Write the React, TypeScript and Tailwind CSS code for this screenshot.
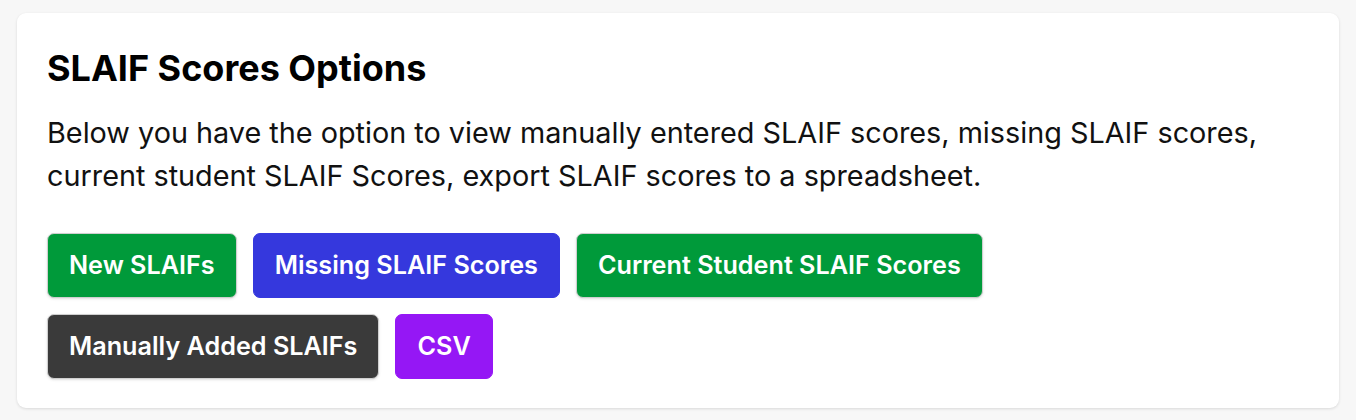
import React from "react";

export default function App() {
  const btn =
    "h-[65px] px-[21px] border rounded-[7px] text-white text-[25.2px] font-semibold leading-none flex items-center";
  return (
    <div
      className="min-h-[420px] bg-[#f7f7f7] px-[17px] pt-[13px]"
      style={{ fontFamily: "Inter, 'Noto Sans', sans-serif" }}
    >
      <div className="bg-white rounded-[9px] shadow-[0_1px_3px_rgba(0,0,0,0.12)] px-[30px] pt-[34px] pb-[29px]">
        <h2 className="text-[36px] font-bold leading-[43px] text-black">
          SLAIF Scores Options
        </h2>
        <p className="mt-[21px] text-[28.8px] leading-[43px] text-[#111]">
          Below you have the option to view manually entered SLAIF scores, missing SLAIF scores,
          <br />
          current student SLAIF Scores, export SLAIF scores to a spreadsheet.
        </p>
        <div className="mt-[36px] flex flex-wrap gap-x-[16px] gap-y-[16px] max-w-[1000px]">
          <button className={`${btn} bg-[#009a3a] border-[#cfcfcf] shadow-sm`}>New SLAIFs</button>
          <button className={`${btn} bg-[#3538dd] border-[#3538dd]`}>Missing SLAIF Scores</button>
          <button className={`${btn} bg-[#009a3a] border-[#cfcfcf] shadow-sm`}>
            Current Student SLAIF Scores
          </button>
          <button className={`${btn} bg-[#3a3a3a] border-[#cfcfcf] shadow-sm`}>
            Manually Added SLAIFs
          </button>
          <button className={`${btn} bg-[#9517f5] border-[#9517f5]`}>CSV</button>
        </div>
      </div>
    </div>
  );
}
